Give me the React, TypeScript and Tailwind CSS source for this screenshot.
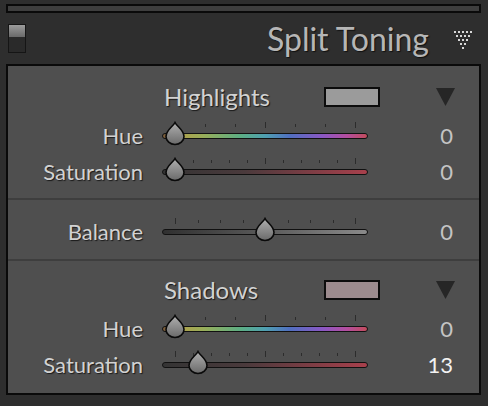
const FONT = { fontFamily: 'Lato, "Open Sans", sans-serif' };

const HUE_GRADIENT =
  'linear-gradient(to right, #7a5a3a 0%, #b0a04c 8%, #98ae5a 20%, #5cae84 38%, #4fa0b0 50%, #5070c0 62%, #8a58c4 78%, #b44ea0 90%, #c24c5c 100%)';
const SAT_GRADIENT = 'linear-gradient(to right, #343434 0%, #4a3a3c 40%, #a8404c 100%)';
const BAL_GRADIENT = 'linear-gradient(to right, #303030 0%, #5a5a5a 50%, #8a8a8a 100%)';

type SliderProps = {
  gradient: string;
  ticks: number;
  value: number; // 0..1 along the range
};

const Thumb = () => (
  <svg width="22" height="25" viewBox="0 0 22 25">
    <defs>
      <linearGradient id="thumbFill" x1="0" y1="0" x2="0" y2="1">
        <stop offset="0" stopColor="#b0b0b0" />
        <stop offset="1" stopColor="#6a6a6a" />
      </linearGradient>
    </defs>
    <path
      d="M11 1.5 C13 5.5 20 9 20 15.5 A9 8 0 0 1 2 15.5 C2 9 9 5.5 11 1.5 Z"
      fill="url(#thumbFill)"
      stroke="#0a0a0a"
      strokeWidth="1.6"
    />
  </svg>
);

const Slider = ({ gradient, ticks, value }: SliderProps) => {
  const start = 13;
  const range = 180;
  return (
    <div className="relative w-[206px] h-[36px] shrink-0">
      {Array.from({ length: ticks }).map((_, i) => {
        const tall = i === 0 || i === ticks - 1 || i === (ticks - 1) / 2;
        return (
          <div
            key={i}
            className={`absolute w-px bg-[#2c2c2c] ${tall ? 'top-[5px] h-[6px]' : 'top-[7px] h-[3px]'}`}
            style={{ left: start + (range * i) / (ticks - 1) }}
          />
        );
      })}
      <div
        className="absolute left-0 top-[16px] h-[6px] w-[206px] rounded-full border border-[#111]"
        style={{ background: gradient }}
      />
      <div className="absolute top-[4px]" style={{ left: start + range * value - 11 }}>
        <Thumb />
      </div>
    </div>
  );
};

type RowProps = SliderProps & { label: string; display: string; bright?: boolean };

const Row = ({ label, display, bright, ...slider }: RowProps) => (
  <div className="flex items-center h-[36px]">
    <div className="w-[135px] text-right text-[22px] text-[#d2d2d2] [text-shadow:1px_1px_1px_#1a1a1a]">
      {label}
    </div>
    <div className="ml-[19px]">
      <Slider {...slider} />
    </div>
    <div
      className={`w-[85px] text-right text-[22px] ${bright ? 'text-[#f2f2f2]' : 'text-[#c4c4c4]'}`}
    >
      {display}
    </div>
  </div>
);

const SectionHeader = ({ title, swatch }: { title: string; swatch: string }) => (
  <div className="flex items-center h-[30px] pl-[156px]">
    <div className="w-[160px] text-[24px] text-[#d2d2d2] [text-shadow:1px_1px_1px_#1a1a1a]">{title}</div>
    <div className="w-[56px] h-[20px] border-2 border-[#0c0c0c]" style={{ background: swatch }} />
    <svg className="ml-[56px]" width="19" height="18" viewBox="0 0 19 18">
      <path d="M0 0 H19 L9.5 18 Z" fill="#262626" />
    </svg>
  </div>
);

const DotTriangle = () => (
  <svg width="20" height="20" viewBox="0 0 20 20">
    {[0, 1, 2, 3, 4].flatMap((r) =>
      Array.from({ length: 5 - r }).map((_, c) => (
        <rect key={`${r}-${c}`} x={1 + r * 2 + c * 4} y={1 + r * 4} width="2" height="2" fill="#d8d8d8" />
      ))
    )}
  </svg>
);

export default function App() {
  return (
    <div className="w-[488px] h-[406px] bg-[#2e2e2e] pt-[4px] px-[6px]" style={FONT}>
      <div className="w-[475px] h-[9px] border-2 border-[#0a0a0a] bg-[#3e3e3e]" />

      {/* header */}
      <div className="flex items-center h-[51px]">
        <div className="ml-[2px] w-[18px] h-[29px] border border-[#151515] flex flex-col bg-[#2a2a2a]">
          <div className="h-[12px] bg-gradient-to-b from-[#9c9c9c] to-[#6a6a6a]" />
        </div>
        <div className="ml-auto text-[32px] text-[#b6b6b6] leading-none [text-shadow:1px_1px_1px_#111]">
          Split Toning
        </div>
        <div className="ml-[24px] mr-[9px] mt-[2px]">
          <DotTriangle />
        </div>
      </div>

      {/* panel */}
      <div className="w-[475px] h-[331px] border-2 border-[#0a0a0a] bg-[#4f4f4f] flex flex-col">
        <div className="pt-[16px] pb-[9px] border-b-2 border-[#3e3e3e]">
          <SectionHeader title="Highlights" swatch="#9b9b9b" />
          <div className="mt-[5px]">
            <Row label="Hue" display="0" gradient={HUE_GRADIENT} ticks={7} value={0} />
            <Row label="Saturation" display="0" gradient={SAT_GRADIENT} ticks={11} value={0} />
          </div>
        </div>
        <div className="pt-[13px] pb-[10px] border-b-2 border-[#3e3e3e]">
          <Row label="Balance" display="0" gradient={BAL_GRADIENT} ticks={9} value={0.5} />
        </div>
        <div className="pt-[14px]">
          <SectionHeader title="Shadows" swatch="#9c8b8e" />
          <div className="mt-[5px]">
            <Row label="Hue" display="0" gradient={HUE_GRADIENT} ticks={7} value={0} />
            <Row label="Saturation" display="13" bright gradient={SAT_GRADIENT} ticks={11} value={0.13} />
          </div>
        </div>
      </div>
    </div>
  );
}
